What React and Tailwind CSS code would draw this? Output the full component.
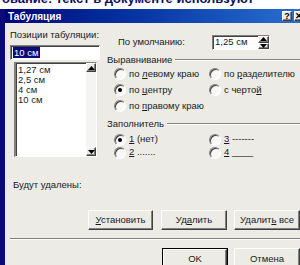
import React from "react";

const sunken =
  "border border-t-[#808080] border-l-[#808080] border-b-white border-r-white shadow-[inset_1px_1px_0_#404040]";
const raised =
  "border border-t-white border-l-white border-b-[#404040] border-r-[#404040] shadow-[inset_-1px_-1px_0_#808080] bg-[#ecebe6]";

const Radio = ({ checked, children }) => (
  <div className="flex items-center gap-[3px]">
    <span className="flex h-[12px] w-[12px] shrink-0 items-center justify-center rounded-full border border-t-[#808080] border-l-[#808080] border-b-white border-r-white bg-[#f8f8f6] shadow-[inset_1px_1px_0_#404040]">
      {checked && <span className="h-[4px] w-[4px] rounded-full bg-black" />}
    </span>
    <span className="whitespace-nowrap">{children}</span>
  </div>
);

const GroupTitle = ({ children }) => (
  <div className="flex items-center gap-[3px] leading-[12px]">
    <span className="whitespace-nowrap">{children}</span>
    <div className="h-[2px] flex-1 border-t border-b border-t-[#808080] border-b-white" />
  </div>
);

const Btn = ({ className, children }) => (
  <div
    className={`flex h-[20px] items-center justify-center whitespace-nowrap ${raised} ${className}`}
  >
    {children}
  </div>
);

const Arrow = ({ up }) => (
  <svg width="7" height="4" viewBox="0 0 7 4">
    {up ? (
      <polygon points="0,4 7,4 3.5,0" fill="#000" />
    ) : (
      <polygon points="0,0 7,0 3.5,4" fill="#000" />
    )}
  </svg>
);

const App = () => {
  return (
    <div className="flex h-[265px] w-[300px] flex-col overflow-hidden bg-white font-['Liberation_Sans',Arial,sans-serif] text-[9.5px] text-[#1a1a1a]">
      {/* document text behind the dialog */}
      <div className="h-[9px] shrink-0 overflow-hidden">
        <div className="-mt-[8px] whitespace-nowrap pl-[2px] text-[13px] font-bold leading-[14px] text-[#10105a]">
          ование: текст в документе используют
        </div>
      </div>

      <div className="flex min-h-0 flex-1">
        <div className="w-[5px] shrink-0 bg-[#0a0a78]" />

        <div className="flex min-w-0 flex-1 flex-col">
          {/* title bar */}
          <div className="flex h-[14px] shrink-0 items-center bg-gradient-to-r from-[#00007a] via-[#0a3aa8] to-[#2a6fd0] pl-[3px]">
            <span className="text-[10px] font-bold text-white">Табуляция</span>
            <div className="-mr-[4px] ml-auto flex gap-[2px]">
              <div className={`flex h-[10px] w-[10px] items-center justify-center text-[9px] font-bold leading-none text-black ${raised}`}>
                ?
              </div>
              <div className={`flex h-[10px] w-[10px] items-center justify-center text-[9px] font-bold leading-none text-black ${raised}`}>
                ✕
              </div>
            </div>
          </div>

          {/* body */}
          <div className="flex flex-1 flex-col bg-[#ecebe6]">
            <div className="flex h-[140px] shrink-0">
              {/* left column */}
              <div className="flex w-[95px] shrink-0 flex-col pl-[5px]">
                <div className="mt-[6px] whitespace-nowrap leading-[12px]">Позиции табуляции:</div>
                <div className={`mt-[4px] flex h-[15px] items-center bg-white pl-[2px] ${sunken}`}>
                  <span className="bg-[#0a0a78] px-[1px] leading-[11px] text-white">10 см</span>
                </div>
                <div className={`ml-[4px] mt-[2px] flex h-[95px] w-[83px] bg-white ${sunken} border-l-2 border-l-[#303030]`}>
                  <div className="flex-1 pl-[2px] pt-[2px] leading-[10px]">
                    <div>1,27 см</div>
                    <div>2,5 см</div>
                    <div>4 см</div>
                    <div>10 см</div>
                  </div>
                  <div className="flex w-[10px] flex-col justify-between bg-[#f4f4f2]">
                    <div className={`flex h-[9px] items-center justify-center ${raised}`}>
                      <Arrow up />
                    </div>
                    <div className={`flex h-[9px] items-center justify-center ${raised}`}>
                      <Arrow />
                    </div>
                  </div>
                </div>
              </div>

              {/* right column */}
              <div className="ml-[7px] flex min-w-0 flex-1 flex-col">
                <div className="mt-[12px] flex h-[15px] items-center">
                  <span className="w-[105px] shrink-0 pl-[11px]">По умолчанию:</span>
                  <div className={`flex h-[15px] w-[58px] items-center bg-white pl-[2px] ${sunken}`}>
                    <span className="flex-1">1,25 см</span>
                    <div className="flex h-full w-[11px] flex-col">
                      <div className={`flex flex-1 items-center justify-center ${raised}`}>
                        <Arrow up />
                      </div>
                      <div className={`flex flex-1 items-center justify-center ${raised}`}>
                        <Arrow />
                      </div>
                    </div>
                  </div>
                </div>

                <div className="mt-[4px]">
                  <GroupTitle>Выравнивание</GroupTitle>
                </div>
                <div className="grid grid-cols-[95px_1fr] pl-[7px]">
                  <div className="flex h-[16px] items-center">
                    <Radio>
                      по <u>л</u>евому краю
                    </Radio>
                  </div>
                  <div className="flex h-[16px] items-center">
                    <Radio>
                      по <u>р</u>азделителю
                    </Radio>
                  </div>
                  <div className="flex h-[16px] items-center">
                    <Radio checked>
                      по <u>ц</u>ентру
                    </Radio>
                  </div>
                  <div className="flex h-[16px] items-center">
                    <Radio>
                      с черто<u>й</u>
                    </Radio>
                  </div>
                  <div className="flex h-[16px] items-center">
                    <Radio>
                      по <u>п</u>равому краю
                    </Radio>
                  </div>
                </div>

                <div className="mt-[4px]">
                  <GroupTitle>Заполнитель</GroupTitle>
                </div>
                <div className="mt-[3px] grid grid-cols-[95px_1fr] pl-[7px]">
                  <div className="flex h-[13px] items-center">
                    <Radio checked>
                      <u>1</u> (нет)
                    </Radio>
                  </div>
                  <div className="flex h-[13px] items-center">
                    <Radio>
                      <u>3</u> -------
                    </Radio>
                  </div>
                  <div className="flex h-[13px] items-center">
                    <Radio>
                      <u>2</u> .......
                    </Radio>
                  </div>
                  <div className="flex h-[13px] items-center">
                    <Radio>
                      <u>4</u> ____
                    </Radio>
                  </div>
                </div>
              </div>
            </div>

            <div className="mt-[16px] pl-[8px] leading-[12px]">Будут удалены:</div>

            <div className="mt-[19px] flex pl-[83px]">
              <Btn className="w-[65px]">
                <span>
                  <u>У</u>становить
                </span>
              </Btn>
              <Btn className="ml-[8px] w-[66px]">
                <span>
                  Уд<u>а</u>лить
                </span>
              </Btn>
              <Btn className="ml-[7px] w-[66px] shrink-0">
                <span>
                  Удалит<u>ь</u> все
                </span>
              </Btn>
            </div>

            <div className="ml-[5px] mt-[8px] h-[2px] border-t border-b border-t-[#808080] border-b-white" />

            <div className="mt-[8px] flex pl-[157px]">
              <div className="flex h-[22px] w-[66px] shrink-0 items-center justify-center border border-black bg-[#ecebe6]">
                <div className={`flex h-full w-full items-center justify-center ${raised}`}>OK</div>
              </div>
              <Btn className="ml-[6px] h-[22px] w-[66px] shrink-0">Отмена</Btn>
            </div>
          </div>
        </div>
      </div>
    </div>
  );
};

export default App;
